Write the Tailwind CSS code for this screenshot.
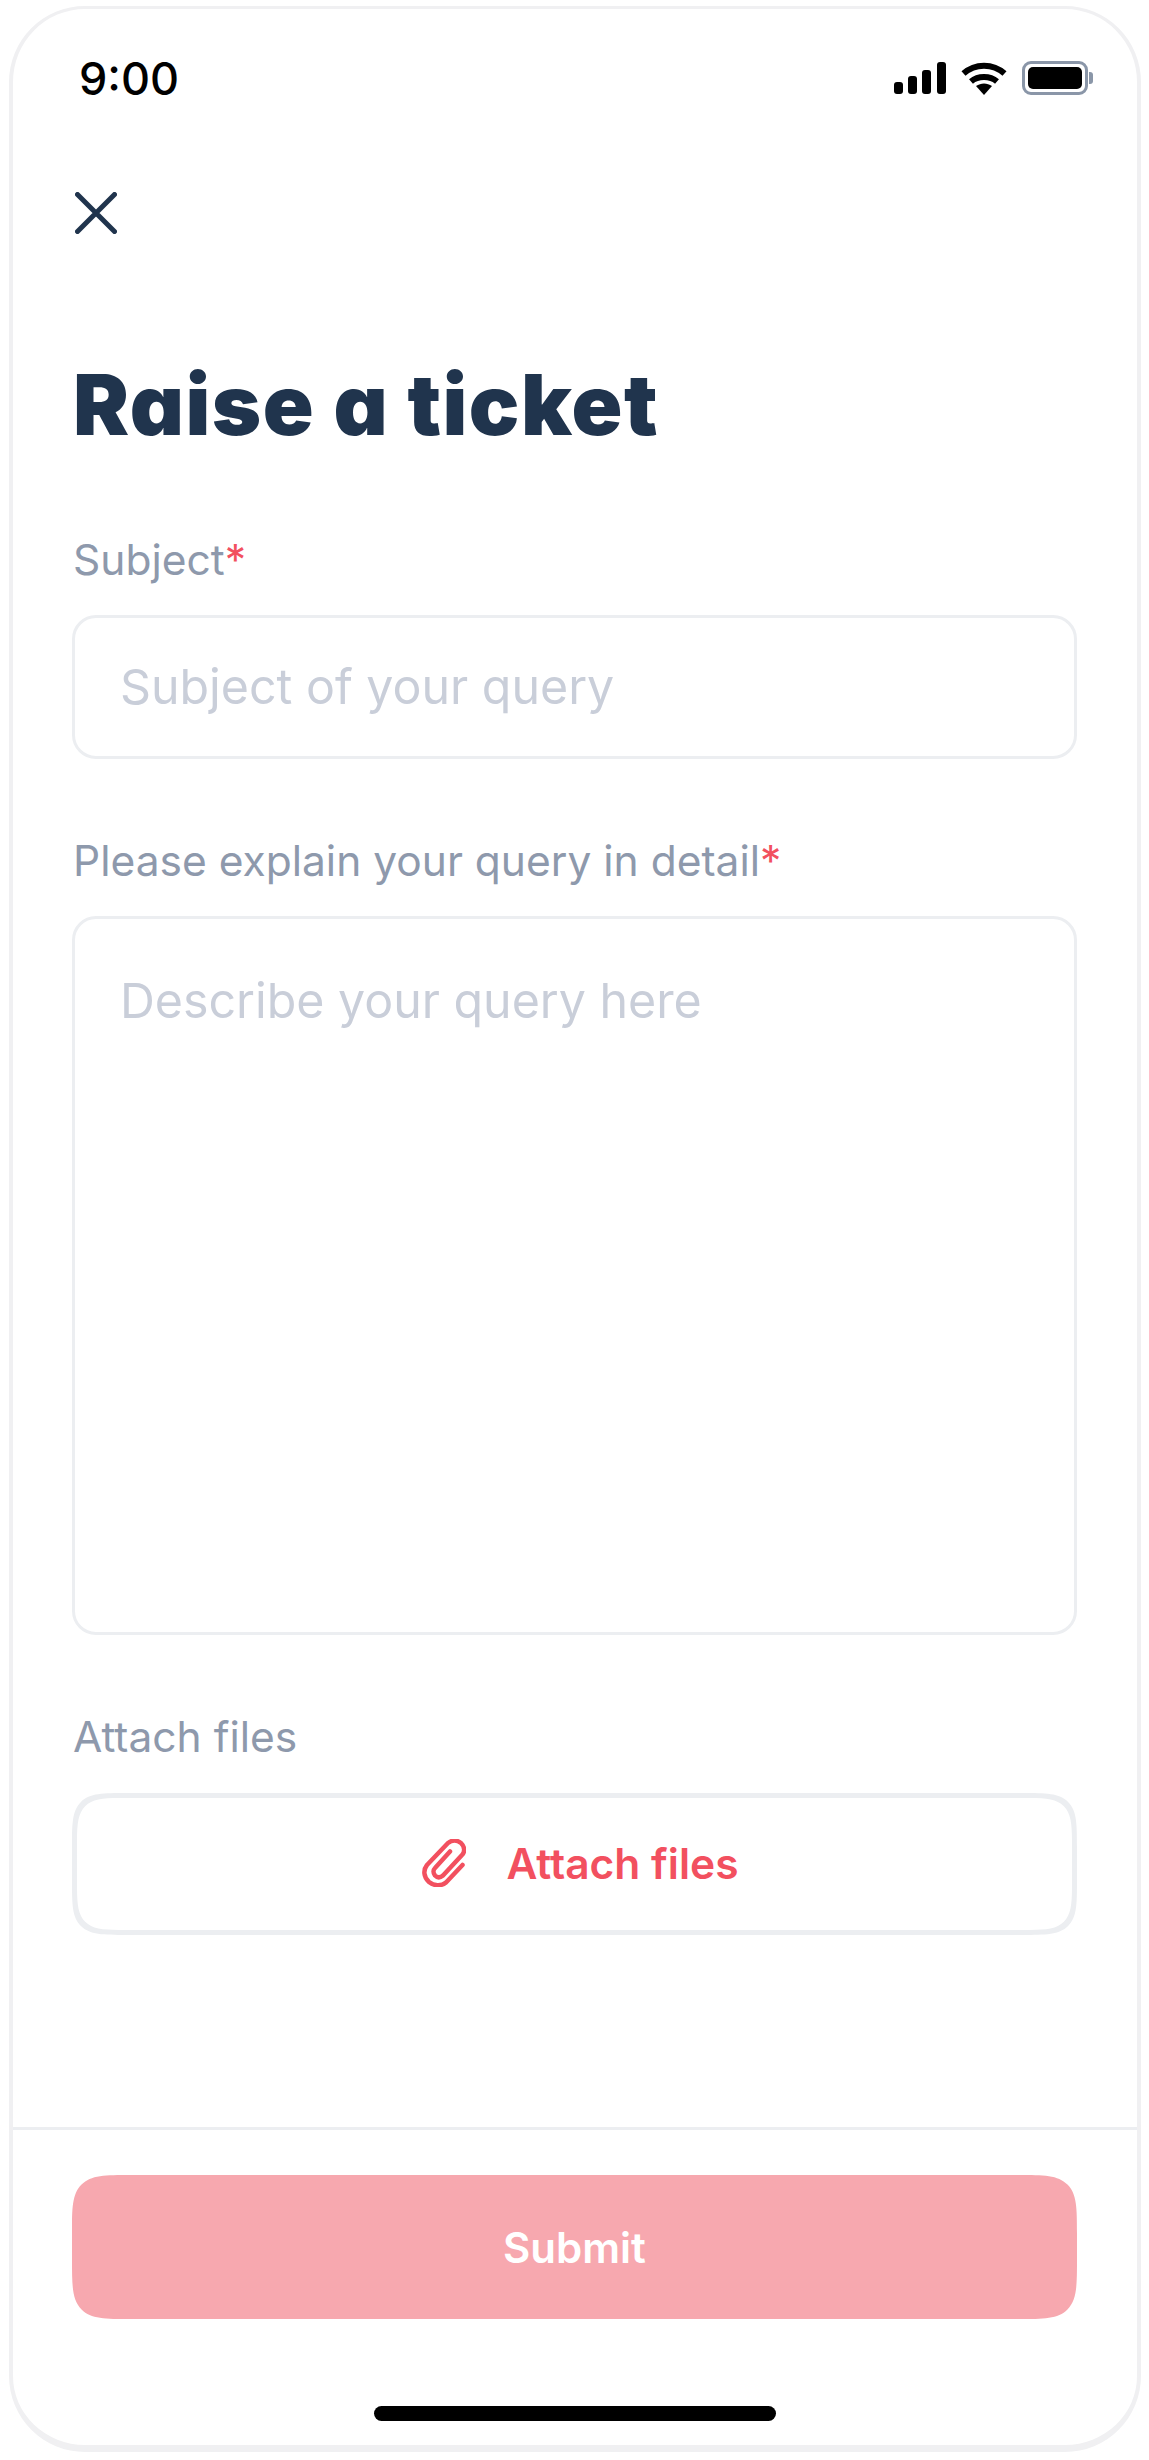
<!DOCTYPE html>
<html lang="en">
<head>
    <meta charset="UTF-8">
    <meta name="viewport" content="width=device-width, initial-scale=1.0">
    <title>Raise a ticket</title>
    <script src="https://cdn.jsdelivr.net/npm/@tailwindcss/browser@4"></script>
</head>
<body class="bg-white font-['Inter',sans-serif]">
    <div class="w-[1149px] h-[2460px] pl-[9px] pr-[8px] pt-[6px] pb-[8px]">
        <!-- Phone frame -->
        <div class="h-full flex flex-col border-[4px] border-t-[3px] border-b-[7px] border-[#f0f0f2] rounded-[76px] bg-white overflow-hidden">
            <!-- Status bar -->
            <div class="h-[101px] shrink-0 pl-[66px] pr-[44px] pt-[41px] flex items-start justify-between">
                <span class="mt-[3px] text-[45px] leading-[52px] font-medium text-black">9:00</span>
                <div class="flex items-center gap-[15px] pt-[11px]">
                    <svg width="52" height="32" viewBox="0 0 52 32" fill="#000">
                        <rect x="0" y="20" width="9" height="12" rx="3"/>
                        <rect x="14" y="14" width="9" height="18" rx="3"/>
                        <rect x="28" y="8" width="9" height="24" rx="3"/>
                        <rect x="43" y="0" width="9" height="32" rx="3"/>
                    </svg>
                    <svg width="46" height="33" viewBox="0 0 46 33" fill="none">
                        <path d="M2.5 11.5C14 1 32 1 43.5 11.5" stroke="#000" stroke-width="6"/>
                        <path d="M10 19.5C17 13.5 29 13.5 36 19.5" stroke="#000" stroke-width="6"/>
                        <path d="M15 24L23 33L31 24C26 20.5 20 20.5 15 24Z" fill="#000"/>
                    </svg>
                    <div class="flex items-center">
                        <div class="w-[66px] h-[34px] rounded-[9px] border-[3px] border-[#8a96a8] p-[3px]">
                            <div class="w-full h-full rounded-[5px] bg-black"></div>
                        </div>
                        <div class="w-[4px] h-[12px] ml-[1px] rounded-r-[3px] bg-[#8a96a8]"></div>
                    </div>
                </div>
            </div>

            <!-- Form -->
            <div class="flex-1 flex flex-col pl-[59px] pr-[60px]">
                <svg class="mt-[82px] ml-[3px]" width="42" height="42" viewBox="0 0 42 42" fill="none">
                    <path d="M2.5 2.5L39.5 39.5M39.5 2.5L2.5 39.5" stroke="#20344d" stroke-width="5" stroke-linecap="round"/>
                </svg>
                <h1 class="mt-[123px] ml-[1px] text-[84px] leading-[96px] font-black tracking-[1.5px] text-[#20344d] [font-feature-settings:'cv11'] whitespace-nowrap">Raise a ticket</h1>

                <label class="mt-[83px] ml-[1px] text-[42.5px] leading-[48px] text-[#8e99ac]">Subject<span class="text-[#f2505f]">*</span></label>
                <div class="mt-[31px] h-[144px] flex items-center px-[45px] border-[3px] border-[#eceef1] rounded-[24px] text-[48.3px] text-[#c9ced9]">Subject of your query</div>

                <label class="mt-[78px] ml-[1px] text-[42.5px] leading-[48px] text-[#8e99ac]">Please explain your query in detail<span class="text-[#f2505f]">*</span></label>
                <div class="mt-[31px] h-[719px] px-[45px] pt-[54px] border-[3px] border-[#eceef1] rounded-[24px] text-[48.3px] leading-[56px] text-[#c9ced9]">Describe your query here</div>

                <label class="mt-[78px] ml-[1px] text-[42.5px] leading-[48px] text-[#8e99ac]">Attach files</label>
                <div class="mt-[32px] h-[142px] pl-[12px] flex items-center justify-center gap-[40px] border-[5px] border-[#eceef1] rounded-[56px] [corner-shape:squircle]">
                    <svg class="mb-[3px]" width="44" height="48" viewBox="0 0 44 48" fill="none" stroke="#f2505f" stroke-width="4.5" stroke-linecap="round" stroke-linejoin="round">
                        <path d="M40.5 26L24 43.5C19 47.5 12 47 7 43C1.5 38 1 31 5 26L26 4C30 1 35 1 39 4C43 8 43 13 40 16L21 36.5C18 39 15 38.5 13 36.5C11 34 11 31 13 29L28 12.5"/>
                    </svg>
                    <span class="text-[42.5px] font-semibold text-[#f2505f]">Attach files</span>
                </div>
            </div>

            <!-- Footer -->
            <div class="h-[318px] shrink-0 border-t-[3px] border-[#eceef1] pl-[59px] pr-[60px] pt-[45px] flex flex-col">
                <button class="h-[144px] rounded-[60px] [corner-shape:squircle] bg-[#f7a8af] text-white text-[42px] font-semibold">Submit</button>
                <div class="mt-[87px] mx-auto w-[402px] h-[15px] rounded-full bg-black"></div>
            </div>
        </div>
    </div>
</body>
</html>
